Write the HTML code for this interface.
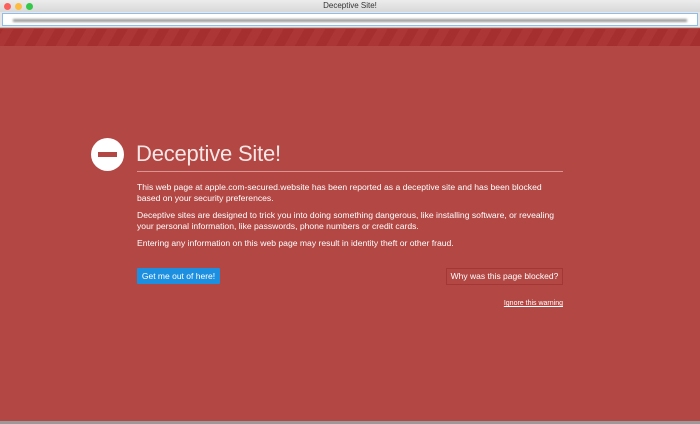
<!DOCTYPE html>
<html><head><meta charset="utf-8"><style>
*{margin:0;padding:0;box-sizing:border-box}
body{width:700px;height:424px;overflow:hidden;background:#b24744;font-family:"Liberation Sans",sans-serif;position:relative}
.title{position:absolute;left:0;top:0;width:700px;height:12px;background:linear-gradient(#ececec,#d8d8d8);font-size:8px;text-align:center;line-height:12px;color:#333}
.dot{position:absolute;top:3px;width:7px;height:7px;border-radius:50%}
.addr{position:absolute;left:0;top:12px;width:700px;height:16px;background:#e6e6e6;border-bottom:1px solid #bbb}
.addr .f{position:absolute;left:2px;right:2px;top:1px;height:13px;background:#fff;border:1px solid #8fbcea}
.addr .f i{position:absolute;left:10px;right:10px;top:5px;height:3px;background:#999;filter:blur(1px)}
.stripes{position:absolute;top:29px;left:0;width:700px;height:17px;background:repeating-linear-gradient(-60deg,#a52f2e 0 9px,#ac3635 9px 18px)}
.icon{position:absolute;left:91px;top:138px;width:33px;height:33px;border-radius:50%;background:#fff}
.icon:after{content:"";position:absolute;left:7px;top:14px;width:19px;height:5px;background:#b24744}
h1{position:absolute;left:136px;top:141px;font-weight:300;font-size:22px;color:#f6e6e5;letter-spacing:-0.2px}
.hr{position:absolute;left:137px;top:171px;width:426px;height:1px;background:#d99593}
.t{position:absolute;left:137px;color:#fff;font-size:8.6px;line-height:11px;width:426px}
.b1{position:absolute;left:137px;top:268px;width:83px;height:16px;background:#1d8fe0;color:#fff;font-size:8.5px;line-height:16px;text-align:center;border-radius:1px}
.b2{position:absolute;left:446px;top:268px;width:117px;height:17px;border:1px solid #a33735;color:#fff;font-size:8.5px;line-height:15px;text-align:center}
.ig{position:absolute;left:502px;top:300px;width:61px;text-align:right;color:#fff;font-size:7px;text-decoration:underline;white-space:nowrap}
.bot{position:absolute;left:0;top:421px;width:700px;height:3px;background:#999}
</style></head><body>
<div class="title">Deceptive Site!</div>
<div class="dot" style="left:4px;background:#fc605c"></div>
<div class="dot" style="left:15px;background:#fdbc40"></div>
<div class="dot" style="left:26px;background:#34c84a"></div>
<div class="addr"><div class="f"><i></i></div></div>
<div class="stripes"></div>
<div class="icon"></div>
<h1>Deceptive Site!</h1>
<div class="hr"></div>
<div class="t" style="top:182px">This web page at apple.com-secured.website has been reported as a deceptive site and has been blocked based on your security preferences.</div>
<div class="t" style="top:210px">Deceptive sites are designed to trick you into doing something dangerous, like installing software, or revealing your personal information, like passwords, phone numbers or credit cards.</div>
<div class="t" style="top:238px">Entering any information on this web page may result in identity theft or other fraud.</div>
<div class="b1">Get me out of here!</div>
<div class="b2">Why was this page blocked?</div>
<div class="ig">Ignore this warning</div>
<div class="bot"></div>
</body></html>
